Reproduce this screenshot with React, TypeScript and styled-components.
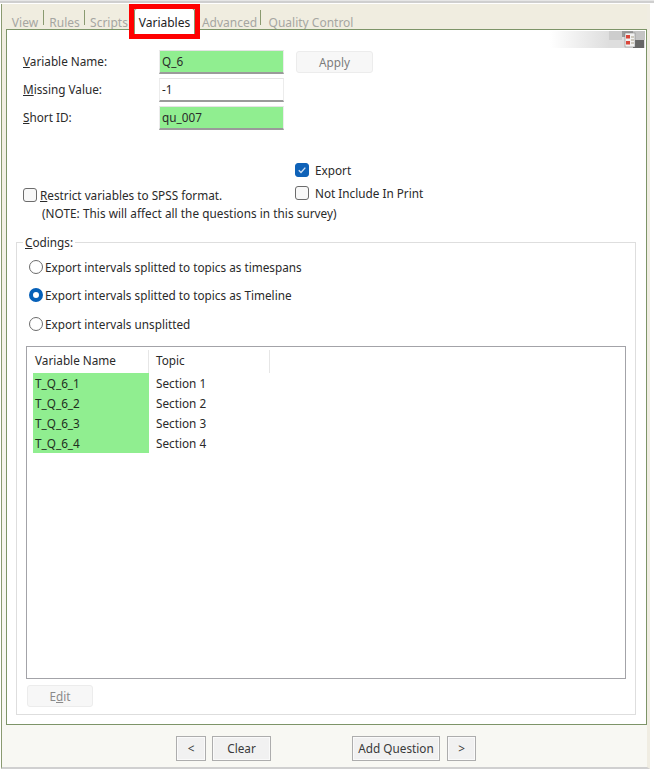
import React from "react";
import styled, { createGlobalStyle } from "styled-components";

const Global = createGlobalStyle`
  html, body { margin: 0; padding: 0; background: #fff; }
  body { font-family: "Noto Sans", "Open Sans", sans-serif; font-size: 11.75px; color: #2a2a2a; }
  * { box-sizing: border-box; }
`;

const Page = styled.div`
  width: 654px; height: 770px; display: flex; flex-direction: column; overflow: hidden; background: #fff;
`;
const TopLine = styled.div`
  height: 3px; flex: none; background: #cfcfcf; border-top: 1px solid #e6e6e6;
`;
const Frame = styled.div`
  flex: 1; min-height: 0; margin: 1px 4px 1px 1px;
  border-left: 1px solid #8a9a70; border-right: 3px solid #f0ede2; border-bottom: 2px solid #d0d0d0;
  background: linear-gradient(#f0ede0 0, #f0ede0 25px, #f8f8f3 720px);
  display: flex; flex-direction: column; padding-left: 4px;
`;
const TabBar = styled.div`
  height: 25px; flex: none; display: flex; align-items: flex-end; position: relative;
`;
const Tab = styled.span<{ $w: number; $last?: boolean }>`
  width: ${p => p.$w}px; height: 19px; flex: none; color: #a6a6a2; font-size: 12px; line-height: 26px;
  text-align: center; white-space: nowrap; position: relative;
  &::after {
    content: ""; position: absolute; right: 0; top: 0; height: 15px; width: 1px;
    background: ${p => (p.$last ? "transparent" : "#8a9a70")};
  }
`;
const ActiveTab = styled.span`
  width: 61px; height: 26px; margin: 0 3px -5px 1px; flex: none; background: #fff; color: #222; font-size: 12px;
  line-height: 28px; text-align: center; position: relative; z-index: 1;
  border: 1px solid #8a9a70; border-bottom: none; border-radius: 3px 3px 0 0;
`;
const RedBox = styled.div`
  position: absolute; left: 123px; top: 0; width: 71px; height: 35px; border: 5px solid #f00; z-index: 2;
`;
const Panel = styled.div`
  width: 641px; height: 696px; flex: none; background: #fff; border: 1px solid #7d9468;
  display: flex; flex-direction: column; padding: 20px 10px 10px 9px; position: relative;
`;
const CornerBadge = styled.div`
  position: absolute; right: 1px; top: 1px; width: 95px; height: 17px;
  background: linear-gradient(90deg, rgba(222,222,222,0), #dedede 62%);
  display: flex; justify-content: flex-end;
`;
const FormTop = styled.div`
  display: flex; flex-direction: column; gap: 5px; padding-left: 7px; height: 116px;
`;
const FieldRow = styled.div`
  display: flex; align-items: center; height: 23px;
`;
const FieldLabel = styled.label`
  width: 136px; flex: none; line-height: 18px; margin-top: -2px;
`;
const Input = styled.div<{ $green?: boolean }>`
  width: 125px; height: 24px; flex: none; padding: 0 2px; line-height: 21px;
  background: ${p => (p.$green ? "#90ee90" : "#fff")};
  border: 1px solid #ececec; border-bottom: 2px solid #9a9a9a; border-top-color: #e4e4e4;
`;
const SoftButton = styled.button`
  font: inherit; color: #7c7c7c; background: #f7f7f7; border: 1px solid #ececec; border-radius: 3px; padding: 0;
`;
const ApplyButton = styled(SoftButton)`
  width: 77px; height: 22px; margin-left: 12px;
`;
const OptionsRow = styled.div`
  display: flex; height: 69px; padding-left: 7px;
`;
const SpssCol = styled.div`
  width: 272px; flex: none; padding-top: 20px;
`;
const ExportCol = styled.div`
  display: flex; flex-direction: column; gap: 5px; margin-top: -5px;
`;
const CheckRow = styled.div`
  display: flex; align-items: center; gap: 6px; height: 18px; line-height: 18px;
`;
const SpssRow = styled(CheckRow)` gap: 3px; `;
const Note = styled.div`
  padding-left: 19px; line-height: 17px; margin-top: 1px; white-space: nowrap; letter-spacing: 0.05px;
`;
const Box = styled.span<{ $on?: boolean }>`
  width: 14px; height: 14px; flex: none; border-radius: 3px; display: inline-flex; align-items: center; justify-content: center;
  background: ${p => (p.$on ? "#0f62b8" : "#f8f8f8")};
  border: 1px solid ${p => (p.$on ? "#0f62b8" : "#6c6c6c")};
`;
const Group = styled.fieldset`
  flex: 1; min-height: 0; margin: 0 0 -1px; padding: 7px 9px 9px 9px; border: 1px solid #dedede;
  display: flex; flex-direction: column; min-width: 0;
`;
const GroupLegend = styled.legend`
  padding: 0 2px; margin-left: -3px; line-height: 14px;
`;
const RadioList = styled.div`
  display: flex; flex-direction: column; gap: 10.25px; margin-top: 2px;
`;
const RadioRow = styled.div`
  display: flex; align-items: center; gap: 2px; height: 18px; line-height: 18px; padding-left: 3px;
`;
const RadioDot = styled.span<{ $on?: boolean }>`
  width: 14px; height: 14px; flex: none; border-radius: 50%; background: #fff;
  border: ${p => (p.$on ? "4px solid #0660b8" : "1px solid #6c6c6c")};
`;
const TableBox = styled.div`
  margin-top: 13.5px; height: 333px; flex: none; border: 1px solid #a3a3a8; padding: 3px 5px 2px 6px; background: #fff;
  display: flex; flex-direction: column;
`;
const HeaderRow = styled.div`
  display: grid; grid-template-columns: 116px 121px; height: 23px; flex: none;
`;
const HeaderCell = styled.div`
  border-right: 1px solid #e6e6e6; padding-left: 2px; line-height: 21px;
  &:nth-child(2) { padding-left: 7px; }
`;
const DataRow = styled.div`
  display: grid; grid-template-columns: 116px 121px; height: 20px; flex: none; line-height: 20px;
`;
const NameCell = styled.div`
  background: #90ee90; padding-left: 2px; color: #1f2f1f;
`;
const TopicCell = styled.div`
  padding-left: 7px;
`;
const EditButton = styled(SoftButton)`
  width: 66px; height: 22px; margin: 6px 0 0 1px; flex: none; color: #8a8a8a;
`;
const Footer = styled.div`
  flex: 1; display: flex; align-items: center; padding: 5px 0 0 170px;
`;
const FootButton = styled.button<{ $w: number; $gap?: number }>`
  font: inherit; color: #3a3a3a; width: ${p => p.$w}px; height: 25px; padding: 0 0 2px; margin-left: ${p => p.$gap ?? 0}px;
  background: #f1f1f1; border: 1px solid #adadad; box-shadow: inset 0 0 0 1px #fafafa; white-space: nowrap;
`;
const Ul = styled.span` text-decoration: underline; `;

const Check = () => (
  <svg width="10" height="10" viewBox="0 0 10 10" fill="none">
    <path d="M1.8 5.2 4 7.4 8.3 2.6" stroke="#cfe0f5" strokeWidth="1.4" />
  </svg>
);

const ChecklistIcon = () => (
  <svg width="36" height="17" viewBox="0 0 36 17">
    <rect x="0" y="0" width="13" height="9" fill="#cdcdcd" />
    <rect x="13" y="0" width="11" height="6" fill="#9a9a9a" />
    <rect x="24" y="0" width="12" height="9" fill="#c4c4c4" />
    <rect x="24" y="9" width="11" height="8" fill="#666" />
    <rect x="16" y="2" width="10" height="14" fill="#f2f2f2" stroke="#777" strokeWidth="0.5" />
    <rect x="17" y="4" width="4" height="3.5" fill="#d9473a" />
    <rect x="17" y="10" width="4" height="3.5" fill="#d9473a" />
    <path d="M22 6h3M22 9h3M22 12h3" stroke="#a9a08a" />
  </svg>
);

const rows = [
  ["T_Q_6_1", "Section 1"],
  ["T_Q_6_2", "Section 2"],
  ["T_Q_6_3", "Section 3"],
  ["T_Q_6_4", "Section 4"],
];

export default function App() {
  return (
    <Page>
      <Global />
      <TopLine />
      <Frame>
        <TabBar>
          <Tab $w={38}>View</Tab>
          <Tab $w={41}>Rules</Tab>
          <Tab $w={48}>Scripts</Tab>
          <ActiveTab>Variables</ActiveTab>
          <Tab $w={63}>Advanced</Tab>
          <Tab $w={100} $last>Quality Control</Tab>
          <RedBox />
        </TabBar>
        <Panel>
          <CornerBadge><ChecklistIcon /></CornerBadge>
          <FormTop>
            <FieldRow>
              <FieldLabel><Ul>V</Ul>ariable Name:</FieldLabel>
              <Input $green>Q_6</Input>
              <ApplyButton>Apply</ApplyButton>
            </FieldRow>
            <FieldRow>
              <FieldLabel><Ul>M</Ul>issing Value:</FieldLabel>
              <Input>-1</Input>
            </FieldRow>
            <FieldRow>
              <FieldLabel><Ul>S</Ul>hort ID:</FieldLabel>
              <Input $green>qu_007</Input>
            </FieldRow>
          </FormTop>
          <OptionsRow>
            <SpssCol>
              <SpssRow><Box /><span><Ul>R</Ul>estrict variables to SPSS format.</span></SpssRow>
              <Note>(NOTE: This will affect all the questions in this survey)</Note>
            </SpssCol>
            <ExportCol>
              <CheckRow><Box $on><Check /></Box>Export</CheckRow>
              <CheckRow><Box />Not Include In Print</CheckRow>
            </ExportCol>
          </OptionsRow>
          <Group>
            <GroupLegend><Ul>C</Ul>odings:</GroupLegend>
            <RadioList>
              <RadioRow><RadioDot />Export intervals splitted to topics as timespans</RadioRow>
              <RadioRow><RadioDot $on />Export intervals splitted to topics as Timeline</RadioRow>
              <RadioRow><RadioDot />Export intervals unsplitted</RadioRow>
            </RadioList>
            <TableBox>
              <HeaderRow>
                <HeaderCell>Variable Name</HeaderCell>
                <HeaderCell>Topic</HeaderCell>
              </HeaderRow>
              {rows.map(([n, t]) => (
                <DataRow key={n}>
                  <NameCell>{n}</NameCell>
                  <TopicCell>{t}</TopicCell>
                </DataRow>
              ))}
            </TableBox>
            <EditButton>E<Ul>d</Ul>it</EditButton>
          </Group>
        </Panel>
        <Footer>
          <FootButton $w={30}>&lt;</FootButton>
          <FootButton $w={59} $gap={6}>Clear</FootButton>
          <FootButton $w={88} $gap={81}>Add Question</FootButton>
          <FootButton $w={29} $gap={7}>&gt;</FootButton>
        </Footer>
      </Frame>
    </Page>
  );
}
